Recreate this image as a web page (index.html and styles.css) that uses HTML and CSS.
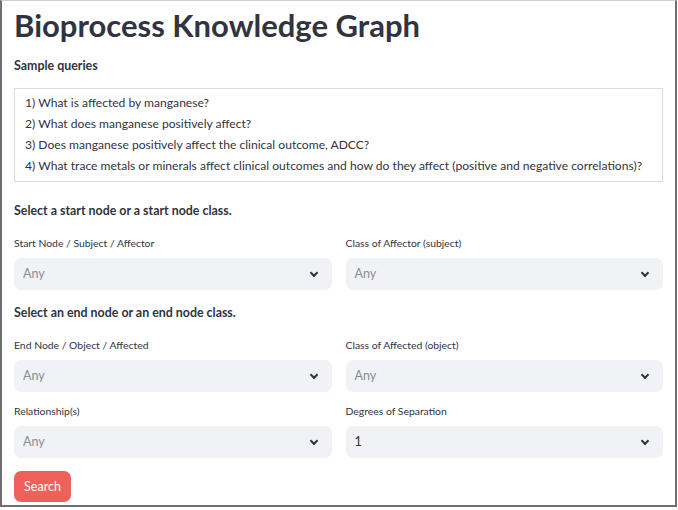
FILE: index.html
```html
<!DOCTYPE html>
<html>
<head>
    <title>Bioprocess Knowledge Graph</title>
    <link rel="stylesheet" href="styles.css">
</head>
<body>
    <div class="frame">
        <h1 class="title">Bioprocess Knowledge Graph</h1>

        <div class="section-label">Sample queries</div>
        <div class="queries">
            <p>1) What is affected by manganese?</p>
            <p>2) What does manganese positively affect?</p>
            <p>3) Does manganese positively affect the clinical outcome, ADCC?</p>
            <p>4) What trace metals or minerals affect clinical outcomes and how do they affect (positive and negative correlations)?</p>
        </div>

        <div class="section-label step">Select a start node or a start node class.</div>
        <div class="row">
            <div class="field">
                <label>Start Node / Subject / Affector</label>
                <div class="select placeholder">Any <span class="chevron"></span></div>
            </div>
            <div class="field">
                <label>Class of Affector (subject)</label>
                <div class="select placeholder">Any <span class="chevron"></span></div>
            </div>
        </div>

        <div class="section-label step">Select an end node or an end node class.</div>
        <div class="row">
            <div class="field">
                <label>End Node / Object / Affected</label>
                <div class="select placeholder">Any <span class="chevron"></span></div>
            </div>
            <div class="field">
                <label>Class of Affected (object)</label>
                <div class="select placeholder">Any <span class="chevron"></span></div>
            </div>
        </div>

        <div class="row row-last">
            <div class="field">
                <label>Relationship(s)</label>
                <div class="select placeholder">Any <span class="chevron"></span></div>
            </div>
            <div class="field">
                <label>Degrees of Separation</label>
                <div class="select">1 <span class="chevron"></span></div>
            </div>
        </div>

        <button class="search-button">Search</button>
    </div>
</body>
</html>
```

FILE: styles.css
```css
/* Halaman dasar */
body {
    margin: 0;
    font-family: Lato, "Noto Sans", sans-serif;
    color: #31333f;
    background: #ffffff;
}

.frame {
    box-sizing: border-box;
    width: 677px;
    height: 507px;
    border: 2px solid #707070;
    border-top: 1px solid #d0d0d0;
    padding: 0 12px;
}

.title {
    margin: 0;
    padding-top: 4px;
    font-size: 31px;
    font-weight: 700;
    line-height: 40px;
    color: #31333f;
}

.section-label {
    margin-top: 13px;
    font-size: 12.4px;
    font-weight: 700;
    line-height: 16px;
}

.section-label.step {
    margin-top: 21px;
}

.row + .section-label.step {
    margin-top: 15px;
}

/* Kotak contoh pertanyaan */
.queries {
    margin-top: 14px;
    border: 1px solid #dcdcdc;
    padding: 3px 10px 5px 10px;
}

.queries p {
    margin: 0;
    font-size: 12.1px;
    line-height: 21px;
}

.row {
    display: flex;
    gap: 14px;
    margin-top: 17px;
}

.field {
    flex: 1;
}

.field label {
    display: block;
    font-size: 10.4px;
    line-height: 14px;
    margin-bottom: 8px;
}

.row-last {
    margin-top: 12px;
}

/* Kotak pilihan */
.select {
    position: relative;
    height: 32px;
    line-height: 32px;
    background-color: #f0f2f6;
    border-radius: 7px;
    padding: 0 9px;
    font-size: 12.5px;
}

.select.placeholder {
    color: #8a8c94;
}

.chevron {
    position: absolute;
    right: 15px;
    top: 12px;
    width: 4px;
    height: 4px;
    border-right: 2px solid #31333f;
    border-bottom: 2px solid #31333f;
    transform: rotate(45deg);
}

.search-button {
    display: block;
    margin-top: 13px;
    width: 57px;
    height: 31px;
    padding: 0;
    background-color: #f0605b;
    color: #ffffff;
    font-family: Lato, "Noto Sans", sans-serif;
    font-size: 12.5px;
    border: none;
    border-radius: 7px;
    cursor: pointer;
}
```
